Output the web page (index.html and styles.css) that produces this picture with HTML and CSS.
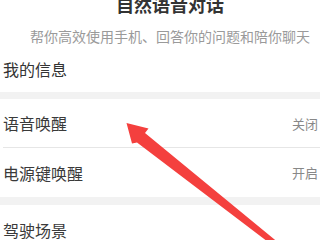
FILE: index.html
```html
<!DOCTYPE html>
<html lang="zh-CN">
<head>
<meta charset="utf-8">
<link rel="stylesheet" href="styles.css">
</head>
<body>
<div class="page">
  <div class="title">自然语音对话</div>
  <div class="subtitle">帮你高效使用手机、回答你的问题和陪你聊天</div>
  <div class="section-head">我的信息</div>
  <div class="band band-a"></div>
  <div class="row"><span class="label">语音唤醒</span><span class="value">关闭</span></div>
  <div class="row row-end"><span class="label">电源键唤醒</span><span class="value">开启</span></div>
  <div class="band band-b"></div>
  <div class="row row-end"><span class="label">驾驶场景</span></div>
</div>
<svg class="arrow" width="320" height="240" viewBox="0 0 320 240">
  <polygon points="126.5,123 148.5,128.5 145,133 280,244 276,248 137,142.5 132,143.5" fill="#f4403e"/>
</svg>
</body>
</html>
```
FILE: styles.css
```css
html, body {
  margin: 0;
  padding: 0;
  background: #ffffff;
  overflow: hidden;
  width: 320px;
  height: 240px;
}
body {
  position: relative;
  font-family: "Noto Sans CJK SC", "Noto Sans", sans-serif;
}
.page {
  width: 340px;
  display: flex;
  flex-direction: column;
  margin-top: -7px;
}
.title {
  height: 22px;
  line-height: 22px;
  font-size: 18px;
  font-weight: 700;
  color: #333333;
  text-align: center;
}
.subtitle {
  height: 20px;
  line-height: 20px;
  margin-top: 11px;
  font-size: 14px;
  color: #9a9a9a;
  text-align: center;
}
.section-head {
  height: 46px;
  line-height: 46px;
  font-size: 16px;
  color: #333333;
  padding-left: 3px;
}
.band {
  background: #f2f2f2;
}
.band-a { height: 7px; }
.band-b { height: 8px; }
.row {
  height: 48px;
  margin-left: 3px;
  padding-right: 22px;
  display: flex;
  align-items: center;
  justify-content: space-between;
  border-bottom: 1px solid #e6e6e6;
}
.row-end { border-bottom: none; height: 49px; }
.label {
  font-size: 16px;
  color: #3a3a3a;
}
.value {
  font-size: 13px;
  color: #888888;
}
.arrow {
  position: absolute;
  left: 0;
  top: 0;
}
```
